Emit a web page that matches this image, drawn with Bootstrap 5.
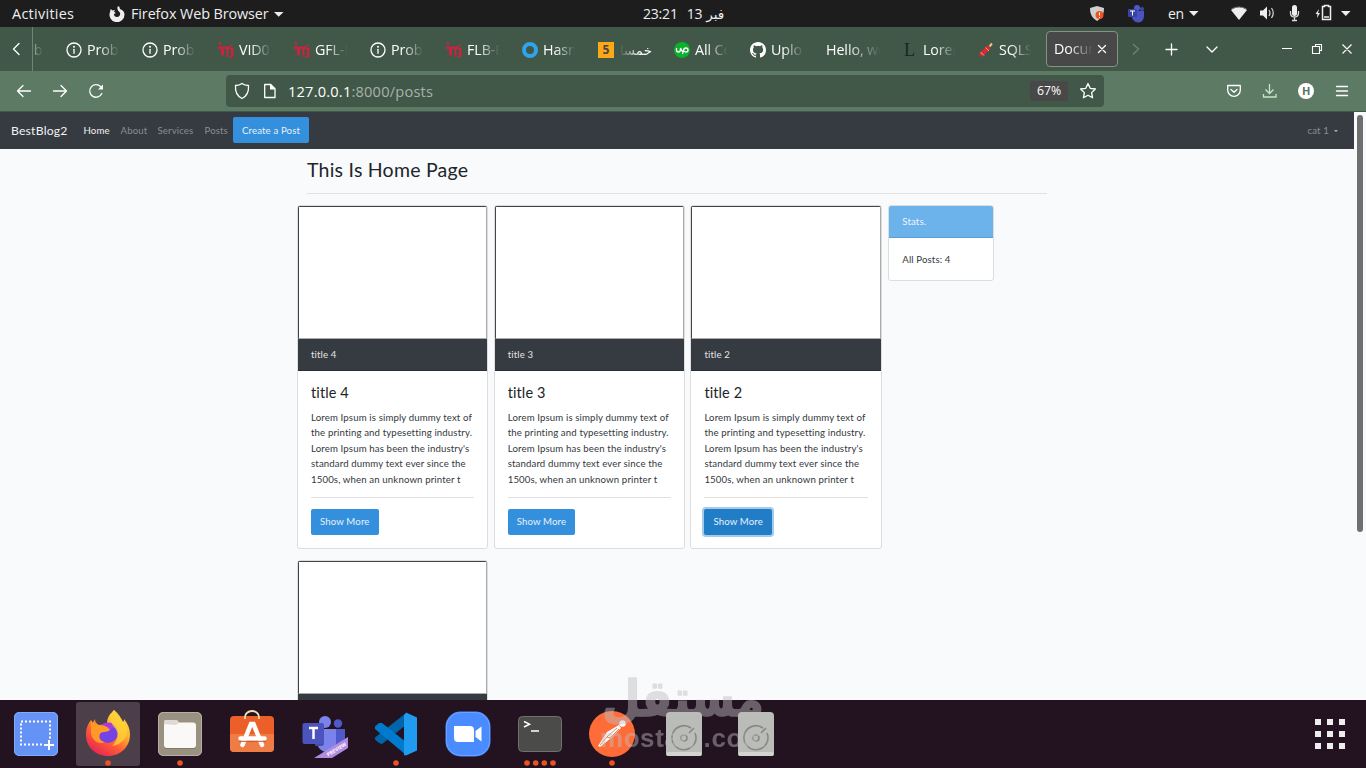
<!DOCTYPE html>
<html lang="en">
<head>
  <meta charset="UTF-8">
  <title>BestBlog2 - Posts</title>
  <link href="https://cdn.jsdelivr.net/npm/bootstrap@5.3.2/dist/css/bootstrap.min.css" rel="stylesheet">
  <style>
    body {
      width: 1366px;
      height: 768px;
      overflow: hidden;
      background: #f8fafc;
      font-family: "Open Sans", "DejaVu Sans", sans-serif;
      font-size: 14px;
      line-height: 20px;
      color: #fff;
    }
    svg { display: block; flex: none; }
    .ln { fill: none; stroke: #fff; stroke-width: 1.3; stroke-linecap: round; stroke-linejoin: round; }

    /* desktop panel */
    .panel { height: 27px; background: #1d1d1d; color: #eee; }
    .panel-left { width: 643px; padding-left: 12px; font-size: 14.4px; }
    .activities { width: 97px; letter-spacing: .3px; }
    .app-name { letter-spacing: -.1px; margin-left: 6px; white-space: nowrap; }
    .clock { width: 446px; gap: 9px; font-size: 14px; letter-spacing: -.2px; }
    .clock .month { font-family: "DejaVu Sans", sans-serif; font-size: 13.5px; margin-left: -5px; }

    /* tabs */
    .tab-strip { height: 44px; background: #415848; }
    .scroll-left { width: 33px; border-right: 1px solid #6e8574; }
    .tab-list { width: 1013px; }
    .tab-item { width: 76px; height: 44px; padding: 1px 8px 0; flex: none; gap: 5px; }
    .tab-item:first-child { margin-left: -51px; }
    .tab-title { width: 33px; overflow: hidden; white-space: nowrap; font-size: 14.3px; letter-spacing: -.1px;
      -webkit-mask-image: linear-gradient(90deg, #000 35%, transparent 98%); mask-image: linear-gradient(90deg, #000 35%, transparent 98%); }
    .tab-title.wide { width: 56px; }
    .tab-title.rtl { -webkit-mask-image: linear-gradient(270deg, #000 35%, transparent 98%); mask-image: linear-gradient(270deg, #000 35%, transparent 98%); font-family: "DejaVu Sans", sans-serif; font-size: 13.5px; }
    .tab-current { width: 72px; height: 36px; padding-left: 7px; background: #484848; border: 1px solid #839487; border-radius: 4px; }
    .tab-current .tab-title { width: 40px; flex: none; }

    /* address bar */
    .toolbar { height: 41px; background: #5d7a65; border-bottom: 1px solid #41584a; padding-left: 16px; }
    .toolbar-nav { width: 210px; gap: 20px; }
    .url-box { width: 878px; height: 32px; background: #415848; border-radius: 4px; padding: 0 4px 0 8px; }
    .url-text { font-size: 14.6px; color: #a7b2aa; letter-spacing: .21px; }
    .zoom-level { width: 38px; height: 20px; background: #484848; border-radius: 3px; font-size: 12.3px; }

    /* blog page, shown at 67% */
    .viewport-box { height: 588px; overflow: hidden; font-family: Lato, "Liberation Sans", sans-serif; font-size: 9.65px; line-height: 15.4px; letter-spacing: .13px; font-variant-ligatures: none; color: #33383d; }
    .blog-page { width: 1354px; }
    .scroll-track { width: 12px; padding: 3px; }
    .scroll-thumb { height: 417px; width: 6px; border-radius: 3px; background: #6f6f6f; }
    .blog-nav { height: 37px; background: #363a41; padding: 0 15px 0 11px; color: #8b8d91; }
    .brand-text { width: 72.5px; font-size: 12.2px; letter-spacing: .2px; color: #f2f3f3; }
    .menu-links { width: 149.5px; display: grid; grid-template-columns: 37px 37px 47px 28.5px; }
    .menu-links .here { color: #f2f3f3; }
    .blog-btn { background: #3490dc; color: #e6f1fa; border: 0; border-radius: 2px; height: 26px; font-size: 9.65px; line-height: 25px; padding: 0 9px 1px; letter-spacing: .13px; }
    .blog-nav .blog-btn { margin-top: -1px; width: 76px; padding: 1px 0 0; }
    .blog-btn.pressed { background: #227dc7; box-shadow: 0 0 0 2px #a3cbec; }
    .blog-wrap { width: 760px; margin: 0 auto; }
    .blog-head { margin: 0 10px 11px; height: 45px; padding-top: 9px; border-bottom: 1px solid #dfe1e3; }
    .blog-head h1 { font-size: 19.5px; line-height: 24px; letter-spacing: .23px; font-weight: 400; margin: 0; color: #212529; }
    .post-grid { display: grid; grid-template-columns: repeat(3, 191.4px); gap: 11px 5.3px; }
    .post-card { border: 1px solid #dcdddf; border-radius: 3px; overflow: hidden; background: #fff; }
    .post-img { height: 133px; border: 1px solid; border-color: #444 #aaa #aaa #444; }
    .post-top { height: 32px; line-height: 31px; padding: 0 13px; background: #363a41; border-bottom: 1px solid #2c2f35; color: #e4e5e6; }
    .post-body { height: 177px; padding: 13px; }
    .post-body h2 { font-size: 14.5px; line-height: 18px; letter-spacing: .1px; font-weight: 400; margin: 0 0 8px; color: #212529; }
    .post-body p { margin: 0; white-space: nowrap; }
    .post-body hr { margin: 9.5px 0 11px; border-color: #000; opacity: .12; }
    .stat-card { width: 105.5px; margin-left: 6.5px; }
    .stat-top { height: 32px; line-height: 31px; padding: 0 13px; background: #6cb2eb; border-bottom: 1px solid #5a9fdb; color: #eef6fd; }
    .stat-body { height: 42px; padding: 14px 13px; }

    /* dock */
    .dock { height: 68px; background: #231320; padding: 2px 21px 2px 4px; }
    .dock-item { width: 64px; height: 64px; border-radius: 3px; }
    .dock-item.focused { background: #4d3f4a; }
    .run { fill: #e95420; }
    .watermark { left: 596px; top: 668px; fill: #bfbdc0; opacity: .455; }
  </style>
</head>
<body class="d-flex flex-column">

<svg width="0" height="0" class="position-absolute">
  <symbol id="info" viewBox="0 0 16 16"><circle cx="8" cy="8" r="7" class="ln"/><path d="M8 7.300v4" class="ln"/><circle cx="8" cy="4.700" r="1" fill="#fff"/></symbol>
  <symbol id="iti" viewBox="0 0 16 16"><path d="M1 0h2v3H1zM0 4.500h13V7h-2.500v8H8.500V7H6v6.500H3V7H0zM12.500 2.500h2v2h-2zM13 6h2.500v8l-2 2H12v-2h1z" fill="#c8233f"/></symbol>
  <symbol id="disk" viewBox="0 0 64 64"><rect x="14" y="10" width="36" height="44" rx="4" fill="#babcb8"/><rect x="14" y="50" width="36" height="4" rx="2" fill="#d2d4d0"/><path d="M39 26a12 12 0 1 0 4 5" fill="none" stroke="#858a84" stroke-width="1.600"/><path d="M37 31l5-5" stroke="#858a84" stroke-width="1.600"/><circle cx="32" cy="36" r="3" fill="none" stroke="#858a84" stroke-width="1.500"/></symbol>
</svg>

<div class="panel d-flex align-items-center">
  <div class="panel-left d-flex align-items-center">
    <span class="activities">Activities</span>
    <svg width="16" height="16" viewBox="0 0 16 16"><path d="M8.500 1 10 0l1 3c3 1 4.500 3 4.500 5.500A7.500 7.500 0 1 1 1 6l.7-3L3.500 4.500 6 4 5 6l2 1-2 1c0 2 1 3 3 3 3 0 4-3 2.500-5C9 5 8 3 8.500 1z" fill="#eee"/></svg>
    <span class="app-name">Firefox Web Browser</span>
    <svg class="ms-1" width="12" height="8"><path d="M1 2h9.500L5.700 6.800z" fill="#eee"/></svg>
  </div>
  <div class="clock d-flex align-items-center"><span>23:21</span><span>13</span><span class="month">فبر</span></div>
  <svg width="277" height="27" viewBox="1089 0 277 27">
    <path d="M1090 8l7-2 7 2c0 6-2 10-7 13-5-3-7-7-7-13z" fill="#cfcfcf"/><circle cx="1099.500" cy="15" r="4" fill="#f0531f"/><path d="M1099.500 12.500v3m0 1.500v1" stroke="#fff"/>
    <circle cx="1137" cy="8" r="3" fill="#5059c9"/><circle cx="1142" cy="9" r="2" fill="#3e48a8"/><path d="M1132 11h12v5a5 5 0 0 1-12 1z" fill="#4b54be"/><rect x="1128" y="9" width="9" height="8" rx="1" fill="#3943a0"/><path d="M1130 11h5m-2.500 0v4.500" stroke="#fff"/>
    <text x="1168" y="18.500" font-size="14" fill="#eee" textLength="16">en</text><path d="M1189 11h9.500l-4.700 5z" fill="#eee"/>
    <path d="M1231 10q8-6 16 0l-8 10z" fill="#eee"/><path d="M1231.500 9q7.500-4 15 0" stroke="#777" fill="none"/>
    <path d="M1260 10.500h3l4-4v13l-4-4h-3z" fill="#eee"/><path d="M1269 10q2 3 0 6m2.500-8q3.500 5 0 10" fill="none" stroke="#ccc" stroke-width="1.300"/>
    <rect x="1292" y="5" width="5" height="11" rx="2.500" fill="#eee"/><path d="M1290.500 11v2q0 4 4 4t4-4v-2M1294.500 17v3M1292 20.500h5" fill="none" stroke="#ddd" stroke-width="1.300"/>
    <path d="M1319 9l-3.500 5h2l-.5 4 3-5h-2z" fill="#eee"/><path d="M1324.500 6.500v-1h4v1h2v13h-8v-13z" fill="none" stroke="#eee" stroke-width="1.500"/><path d="M1324 17h5" stroke="#eee" stroke-width="1.500"/>
    <path d="M1341 11h9.500l-4.700 5z" fill="#eee"/>
  </svg>
</div>

<div class="tab-strip d-flex align-items-center">
  <div class="scroll-left h-100 d-flex align-items-center"><svg width="32" height="20"><path d="M19 4.500 13.500 10l5.500 5.500" class="ln"/></svg></div>
  <div class="tab-list d-flex overflow-hidden">
    <div class="tab-item d-flex align-items-center"><svg width="16" height="16"><use href="#info"/></svg><span class="tab-title">Prob</span></div>
    <div class="tab-item d-flex align-items-center"><svg width="16" height="16"><use href="#info"/></svg><span class="tab-title">Prob</span></div>
    <div class="tab-item d-flex align-items-center"><svg width="16" height="16"><use href="#info"/></svg><span class="tab-title">Prob</span></div>
    <div class="tab-item d-flex align-items-center"><svg width="16" height="16"><use href="#iti"/></svg><span class="tab-title">VID0</span></div>
    <div class="tab-item d-flex align-items-center"><svg width="16" height="16"><use href="#iti"/></svg><span class="tab-title">GFL-F</span></div>
    <div class="tab-item d-flex align-items-center"><svg width="16" height="16"><use href="#info"/></svg><span class="tab-title">Prob</span></div>
    <div class="tab-item d-flex align-items-center"><svg width="16" height="16"><use href="#iti"/></svg><span class="tab-title">FLB-F</span></div>
    <div class="tab-item d-flex align-items-center"><svg width="16" height="16"><circle cx="8" cy="8" r="6" fill="none" stroke="#2fa4ec" stroke-width="4"/></svg><span class="tab-title">Hasn</span></div>
    <div class="tab-item d-flex align-items-center"><svg width="16" height="16"><path d="M0 0h16v16H0z" fill="#fba919"/><text x="4.500" y="12.300" font-size="12" font-weight="700" fill="#4d4544">5</text></svg><span class="tab-title rtl" dir="rtl">خمسات</span></div>
    <div class="tab-item d-flex align-items-center"><svg width="16" height="16"><circle cx="8" cy="8" r="8" fill="#0cb02c"/><path d="M2.500 6v2q0 2 2 2t2-3V6q1 3 2.500 4M8.500 12l1-4q.5-2 2.500-2t2 2-2 2-3-2" fill="none" stroke="#fff" stroke-width="1.300"/></svg><span class="tab-title">All Co</span></div>
    <div class="tab-item d-flex align-items-center"><svg width="16" height="16" viewBox="0 0 16 16"><path fill="#fff" d="M8 0C3.580 0 0 3.580 0 8c0 3.540 2.290 6.530 5.470 7.590.4.070.55-.17.55-.38v-1.490c-2.010.37-2.530-.49-2.690-.94-.09-.23-.48-.94-.82-1.130-.28-.15-.68-.52-.01-.53.63-.01 1.080.58 1.230.82.72 1.210 1.870.87 2.330.66.07-.52.28-.87.51-1.070-1.780-.2-3.640-.89-3.640-3.950 0-.87.31-1.590.82-2.150-.08-.2-.36-1.020.08-2.120 0 0 .67-.21 2.200.82a7.500 7.500 0 0 1 4 0c1.530-1.040 2.200-.82 2.200-.82.44 1.100.16 1.920.08 2.120.51.56.82 1.270.82 2.150 0 3.070-1.870 3.750-3.650 3.950.29.25.54.73.54 1.480v2.200c0 .21.15.46.55.38A8.010 8.010 0 0 0 16 8c0-4.420-3.580-8-8-8z"/></svg><span class="tab-title">Uplo</span></div>
    <div class="tab-item d-flex align-items-center"><span class="tab-title wide">Hello, wo</span></div>
    <div class="tab-item d-flex align-items-center"><svg width="16" height="16"><text x="2" y="13.500" font-size="18" font-family="Liberation Serif" fill="#1d241f">L</text></svg><span class="tab-title">Lorem</span></div>
    <div class="tab-item d-flex align-items-center"><svg width="16" height="16"><path d="M2.500 13.500 11 5" stroke="#dd2540" stroke-width="4.500"/><path d="M2.500 10l3.500 3.500M7.500 5.500l3.500 3.500" stroke="#f5b73b"/><path d="m11.500 4.500 2.500-3" stroke="#f5c16b" stroke-width="2"/></svg><span class="tab-title">SQLST</span></div>
  </div>
  <div class="tab-current d-flex align-items-center">
    <span class="tab-title">Docum</span>
    <svg width="16" height="16"><path d="m4.500 4.500 7 7m0-7-7 7" class="ln"/></svg>
  </div>
  <svg width="248" height="44" viewBox="1118 27 248 44">
    <path d="m1133 44 5.500 5-5.500 5.500" fill="none" stroke="#6d8072" stroke-width="1.400"/>
    <path d="M1166 49.500h11M1171.500 44v11M1207 47l5 5 5-5" class="ln"/>
    <path d="M1282 48.500h10M1315.500 46.500v-2h6v6h-2M1312.500 46.500h7v7h-7zM1342.500 44.500l9 9m0-9-9 9" fill="none" stroke="#fff" stroke-width="1.100"/>
  </svg>
</div>

<div class="toolbar d-flex align-items-center">
  <div class="toolbar-nav d-flex">
    <svg width="16" height="16"><path d="M1.500 8h13M7 2.500 1.500 8 7 13.500" class="ln"/></svg>
    <svg width="16" height="16"><path d="M1.500 8h13M9 2.500 14.500 8 9 13.500" class="ln"/></svg>
    <svg width="16" height="16"><path d="M13.800 10.500A6.300 6.300 0 1 1 12.500 3.500l1.500 1.700" class="ln"/><path d="M15 1.500v5h-5z" fill="#fff"/></svg>
  </div>
  <div class="url-box d-flex align-items-center">
    <svg width="16" height="18"><path d="M8 1.500C6 3 4 3.500 1.500 3.500 1 10 3 14 8 16.500c5-2.500 7-6.500 6.500-13C12 3.500 10 3 8 1.500z" class="ln"/></svg>
    <svg width="38" height="16"><path d="M14.700 1.500h6l4.300 4.300v8.700H14.700z" class="ln"/><path d="M20 1v5.500h5.500z" fill="#fff"/></svg>
    <span class="url-text"><span class="text-white">127.0.0.1</span>:8000/posts</span>
    <span class="zoom-level ms-auto d-flex align-items-center justify-content-center">67%</span>
    <svg class="ms-2" width="24" height="18"><path d="m12 1.500 2.200 4.800 5.200.7-3.800 3.600 1 5.200-4.600-2.500-4.600 2.500 1-5.200L4.600 7l5.200-.7z" class="ln"/></svg>
  </div>
  <svg width="262" height="40" viewBox="1104 71 262 40">
    <path d="M1227.700 85.500h12.600v4.500a6.300 6.300 0 0 1-12.600 0zM1231 89.500l3 2.800 3-2.800" class="ln"/>
    <path d="M1269.500 84v9.500m-4-4 4 4 4-4M1263.500 94v3h12.500v-3" fill="none" stroke="#c9e5c6" stroke-width="1.300"/>
    <circle cx="1306" cy="91" r="8" fill="#fff"/><text x="1302" y="95" font-size="11" font-weight="700" fill="#58745f">H</text>
    <path d="M1336.500 86.500h11M1336.500 91h11M1336.500 95.500h11" class="ln"/>
  </svg>
</div>

<div class="viewport-box d-flex">
  <div class="blog-page">
    <nav class="blog-nav d-flex align-items-center">
      <span class="brand-text">BestBlog2</span>
      <div class="menu-links">
        <span class="here">Home</span>
        <span>About</span>
        <span>Services</span>
        <span>Posts</span>
      </div>
      <button class="blog-btn">Create a Post</button>
      <span class="ms-auto d-flex align-items-center">cat 1 <svg class="ms-1" width="6" height="4"><path d="M1 1h4L3 3.200z" fill="#a5a7aa"/></svg></span>
    </nav>
    <div class="blog-wrap">
      <div class="blog-head"><h1>This Is Home Page</h1></div>
      <div class="d-flex align-items-start">
        <div class="post-grid">
          <div class="post-card">
            <div class="post-img"></div>
            <div class="post-top">title 4</div>
            <div class="post-body">
              <h2>title 4</h2>
              <p>Lorem Ipsum is simply dummy text of<br>the printing and typesetting industry.<br>Lorem Ipsum has been the industry's<br>standard dummy text ever since the<br>1500s, when an unknown printer t</p>
              <hr>
              <button class="blog-btn">Show More</button>
            </div>
          </div>
          <div class="post-card">
            <div class="post-img"></div>
            <div class="post-top">title 3</div>
            <div class="post-body">
              <h2>title 3</h2>
              <p>Lorem Ipsum is simply dummy text of<br>the printing and typesetting industry.<br>Lorem Ipsum has been the industry's<br>standard dummy text ever since the<br>1500s, when an unknown printer t</p>
              <hr>
              <button class="blog-btn">Show More</button>
            </div>
          </div>
          <div class="post-card">
            <div class="post-img"></div>
            <div class="post-top">title 2</div>
            <div class="post-body">
              <h2>title 2</h2>
              <p>Lorem Ipsum is simply dummy text of<br>the printing and typesetting industry.<br>Lorem Ipsum has been the industry's<br>standard dummy text ever since the<br>1500s, when an unknown printer t</p>
              <hr>
              <button class="blog-btn pressed">Show More</button>
            </div>
          </div>
          <div class="post-card">
            <div class="post-img"></div>
            <div class="post-top"></div>
          </div>
        </div>
        <div class="post-card stat-card">
          <div class="stat-top">Stats.</div>
          <div class="stat-body">All Posts: 4</div>
        </div>
      </div>
    </div>
  </div>
  <div class="scroll-track"><div class="scroll-thumb"></div></div>
</div>

<div class="dock d-flex align-items-center gap-2">
  <svg class="dock-item" viewBox="0 0 64 64"><rect x="10" y="10" width="44" height="44" rx="5" fill="#6592f5"/><rect x="10.500" y="10.500" width="43" height="43" rx="5" fill="none" stroke="#83a9fa"/><path d="M17 19.500h29v23H17z" fill="none" stroke="#fff" stroke-width="2" stroke-dasharray="2 2"/><path d="M39 37h12v12H39z" fill="#6592f5"/><path d="M40 43h10M45 38v10" stroke="#fff" stroke-width="2"/></svg>
  <div class="dock-item focused">
    <svg width="64" height="64" viewBox="0 0 64 64">
      <defs><linearGradient id="fox" x1=".85" y1="0" x2=".2" y2="1"><stop offset="0" stop-color="#ffe14a"/><stop offset=".35" stop-color="#ffb52e"/><stop offset=".65" stop-color="#ff5a36"/><stop offset="1" stop-color="#e31f58"/></linearGradient></defs>
      <path d="M38 8c5 4 7 8 9 12 1-1 1-2 1-3 4 5 6 10 6 15.500C54 45 44.500 54 32 54S10 45 10 33c0-7 2-11 5-15l1 4 3-5c0 3 1 4 4 6l8-1c0-7 3-10 7-14z" fill="url(#fox)"/>
      <circle cx="32" cy="31" r="10" fill="#7542e5"/><path d="M23 25c6-6 14-6 18 1-3-1-5 0-7 2z" fill="#a63bdd"/>
      <path d="M15 18c2 4 5 5 9 5 5 0 9 3 10 5-4 3-8 1-10 4-2 4 1 8 5 8-7 3-13-2-14-9z" fill="#ff9a28"/>
      <path d="M38 8c-5 6-4 12 0 17 6 6 4 14-2 19 10-1 16-9 15-18-3-5-8-12-13-18z" fill="#ffd338" opacity=".75"/>
      <circle class="run" cx="32" cy="61" r="2.800"/>
    </svg>
  </div>
  <svg class="dock-item" viewBox="0 0 64 64"><rect x="10" y="10" width="44" height="44" rx="5" fill="#999280"/><rect x="10.500" y="10.500" width="43" height="43" rx="5" fill="none" stroke="#b5b0a3"/><path d="M16 20q0-2 2-2h10q2 0 3 3v6H16z" fill="#d9d4cc"/><rect x="16" y="21" width="32" height="26" rx="3" fill="#817b6d"/><rect x="16" y="20.500" width="32" height="25.500" rx="3" fill="#faf9f7"/><path d="M16 22v-2q0-2 2-2h10q2 0 3 2.700-2 2.500-4 2.300z" fill="#dfdad3"/><circle class="run" cx="32" cy="61" r="2.800"/></svg>
  <svg class="dock-item" viewBox="0 0 64 64"><rect x="10" y="14" width="44" height="36" rx="4" fill="#ed5f28"/><path d="M10 32h44v14q0 4-4 4H14q-4 0-4-4z" fill="#f07c45"/><path d="M25 17v-2a7 6 0 0 1 14 0v2" fill="none" stroke="#f7dfae" stroke-width="1.800"/><path d="M22.500 43 31 22h2.500L42 43M20.500 36.500h24" fill="none" stroke="#fff" stroke-width="4.500" stroke-linecap="round"/><path d="M19 39.300h27" stroke="#c9512b" stroke-width="1"/></svg>
  <svg class="dock-item" viewBox="0 0 64 64"><circle cx="33" cy="20" r="6" fill="#7b83eb"/><circle cx="46" cy="21.500" r="4.200" fill="#5059c9"/><path d="M43 27h10v15q-3 6-10 5z" fill="#5059c9"/><path d="M25 27h19v15q-2 8-9 8t-10-8z" fill="#7b83eb"/><path d="M25 24h7v17q0 3-3 3h-6z" fill="#454da8"/><rect x="10.500" y="21" width="21.500" height="21" rx="2" fill="#4b53bc"/><path d="M17 26h9m-4.500 0v11" stroke="#fff" stroke-width="2.500"/><path d="M22 56 56 35v11L40 56z" fill="#b38ae2"/><text transform="translate(36 54.500) rotate(-31)" font-size="5" font-weight="700" fill="#fff">PREVIEW</text></svg>
  <svg class="dock-item" viewBox="0 0 64 64"><path d="M42 11v12L18 42l-3-1-4-3.500v-2z" fill="#0065a9"/><path d="M11 27v-2.500l4-3.500h3l24 19v13z" fill="#007acc"/><path d="m42 10.500 11 5v33L42 53.500z" fill="#1f9cf0"/><path d="M40 53.500 42 53V11l-2 2z" fill="#1f9cf0"/><circle class="run" cx="32" cy="61" r="2.800"/></svg>
  <svg class="dock-item" viewBox="0 0 64 64"><rect x="9.500" y="9.500" width="45" height="45" rx="15" fill="#4a8cff"/><rect x="10.500" y="10.500" width="43" height="43" rx="14" fill="none" stroke="#6ba1ff"/><path d="M18 24h16q4 0 4 4v12H22q-4 0-4-4zM39.500 29l6-4.500v15l-6-4.500z" fill="#fff"/></svg>
  <svg class="dock-item" viewBox="0 0 64 64"><rect x="10.500" y="14.500" width="43" height="35" rx="4" fill="#4b4b4a" stroke="#70706e"/><path d="m16 19.500 5.500 2.700L16 25" fill="none" stroke="#fff" stroke-width="1.500"/><path d="M23 29h8" stroke="#fff" stroke-width="1.500"/><g class="run"><circle cx="19" cy="61" r="2.800"/><circle cx="27.700" cy="61" r="2.800"/><circle cx="36.300" cy="61" r="2.800"/><circle cx="45" cy="61" r="2.800"/></g></svg>
  <svg class="dock-item" viewBox="0 0 64 64"><circle cx="32" cy="32" r="23" fill="#ff6c37"/><circle cx="42.500" cy="21.500" r="3.200" fill="#fff"/><path d="m39 23 2 3-10 10-11 9-2-1 9-14z" fill="#fff"/><path d="m37 26-10 9 3 1 9-9M27 35l-7 8" fill="none" stroke="#e46132" stroke-width=".8"/><circle class="run" cx="32" cy="61" r="2.800"/></svg>
  <svg class="dock-item"><use href="#disk"/></svg>
  <svg class="dock-item"><use href="#disk"/></svg>
  <svg class="ms-auto" width="30" height="30" fill="#eee"><path d="M0 0h6v6H0zM12 0h6v6h-6zM24 0h6v6h-6zM0 12h6v6H0zM12 12h6v6h-6zM24 12h6v6h-6zM0 24h6v6H0zM12 24h6v6h-6zM24 24h6v6h-6z"/></svg>
</div>

<svg class="watermark position-absolute" width="180" height="100">
  <text x="6" y="48" font-family="DejaVu Sans" font-weight="700" font-size="50" textLength="162" lengthAdjust="spacingAndGlyphs" stroke="#bfbdc0" stroke-width="1.500" stroke-linejoin="round">مستقل</text>
  <text x="4" y="79" font-family="Liberation Sans" font-weight="700" font-size="26" textLength="166">mostaql.com</text>
</svg>

<script src="https://cdn.jsdelivr.net/npm/bootstrap@5.3.2/dist/js/bootstrap.bundle.min.js"></script>
</body>
</html>
